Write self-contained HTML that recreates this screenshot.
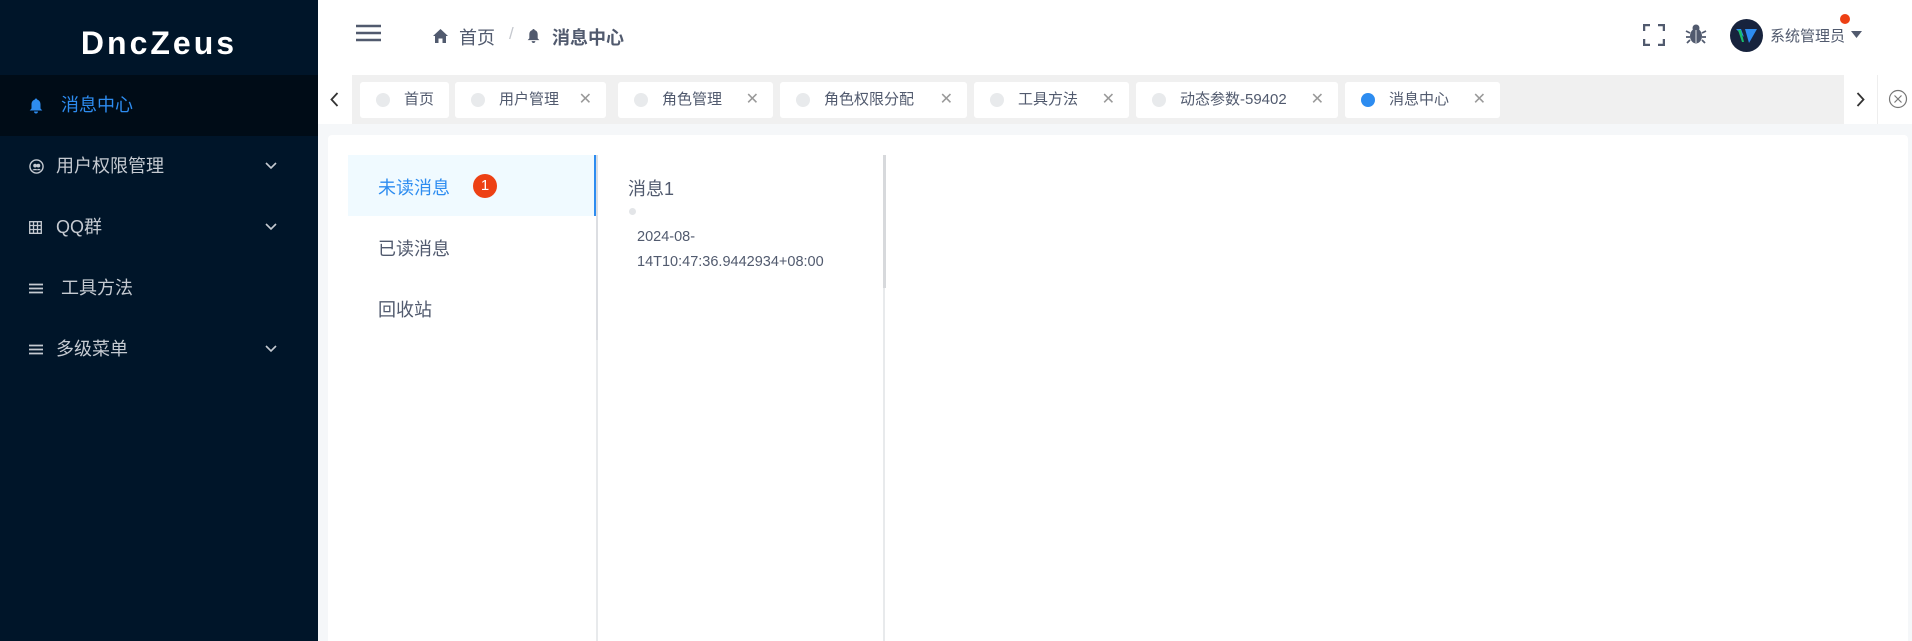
<!DOCTYPE html>
<html><head><meta charset="utf-8"><style>
*{box-sizing:border-box;margin:0;padding:0}
html,body{width:1912px;height:641px;overflow:hidden}
body{background:#f5f7f9;font-family:"Liberation Sans","Noto Sans CJK SC",sans-serif;position:relative}
.abs{position:absolute}
.side{left:0;top:0;width:318px;height:641px;background:#001529}
.logo{left:0;top:0;width:318px;height:75px;line-height:86px;text-align:center;color:#fff;font-size:32px;font-weight:bold;letter-spacing:3px}
.mi{left:0;width:318px;height:61px;color:#c5cad1;font-size:18px;line-height:61px}
.mi .ic{position:absolute;left:29px;top:0}
.mi .t{position:absolute;left:56px}
.mi .ch{position:absolute;left:265px;top:0}
.hdr{left:318px;top:0;width:1594px;height:75px;background:#fff}
.tabbar{left:318px;top:75px;width:1594px;height:49px;background:#f0f0f0}
.tab{top:82px;height:36px;background:#fff;border-radius:3px;font-size:15px;color:#515a6e;line-height:36px}
.tab .d{position:absolute;left:16px;top:11px;width:14px;height:14px;border-radius:50%;background:#e8eaec}
.tab .l{position:absolute;left:44px}
.tab .x{position:absolute;right:14px;top:0;color:#999;font-size:16px}
.card{left:328px;top:135px;width:1580px;height:506px;background:#fff;border-radius:4px 4px 0 0}
</style></head><body>
<div class="abs side"></div>
<div class="abs logo">DncZeus</div>
<div class="abs mi" style="top:75px;background:#000c17;color:#2d8cf0">
<svg class="ic" style="top:23px" width="14" height="16" viewBox="0 0 14 16"><path d="M7 0.5c.8 0 1.3.6 1.3 1.2C10.5 2.3 11.5 4 11.5 6.5v4l1.8 2H.7l1.8-2v-4C2.5 4 3.5 2.3 5.7 1.7 5.7 1.1 6.2.5 7 .5zM5 13.5h4c0 1.2-.9 2-2 2s-2-.8-2-2z" fill="#2d8cf0"/></svg>
<span class="t" style="left:61px">消息中心</span></div>
<div class="abs mi" style="top:136px">
<svg class="ic" style="top:23px" width="15" height="15" viewBox="0 0 16 16"><circle cx="8" cy="8" r="7" fill="none" stroke="#c5cad1" stroke-width="1.5"/><circle cx="6.5" cy="7" r="2" fill="#c5cad1"/><circle cx="10" cy="7" r="2" fill="#c5cad1"/><path d="M3.5 12c1-2 5-2 6 0zM8 12c1-2 4-2 4.5 0z" fill="#c5cad1"/></svg>
<span class="t">用户权限管理</span>
<svg class="ch" style="top:26px" width="12" height="8" viewBox="0 0 12 8"><path d="M1 1l5 5 5-5" fill="none" stroke="#c5cad1" stroke-width="1.6"/></svg></div>
<div class="abs mi" style="top:197px">
<svg class="ic" style="top:24px" width="13" height="13" viewBox="0 0 13 13"><path d="M.7.7h11.6v11.6H.7zM4.5.7v11.6M8.5.7v11.6M.7 4.5h11.6M.7 8.5h11.6" fill="none" stroke="#c5cad1" stroke-width="1.3"/></svg>
<span class="t">QQ群</span>
<svg class="ch" style="top:26px" width="12" height="8" viewBox="0 0 12 8"><path d="M1 1l5 5 5-5" fill="none" stroke="#c5cad1" stroke-width="1.6"/></svg></div>
<div class="abs mi" style="top:258px">
<svg class="ic" style="top:25px" width="14" height="11" viewBox="0 0 14 11"><path d="M0 1.5h14M0 5.5h14M0 9.5h14" stroke="#c5cad1" stroke-width="1.8"/></svg>
<span class="t" style="left:61px">工具方法</span></div>
<div class="abs mi" style="top:319px">
<svg class="ic" style="top:25px" width="14" height="11" viewBox="0 0 14 11"><path d="M0 1.5h14M0 5.5h14M0 9.5h14" stroke="#c5cad1" stroke-width="1.8"/></svg>
<span class="t">多级菜单</span>
<svg class="ch" style="top:26px" width="12" height="8" viewBox="0 0 12 8"><path d="M1 1l5 5 5-5" fill="none" stroke="#c5cad1" stroke-width="1.6"/></svg></div>

<div class="abs hdr"></div>
<svg class="abs" style="left:356px;top:24px" width="25" height="18" viewBox="0 0 25 18"><path d="M0 2h25M0 9h25M0 16h25" stroke="#515a6e" stroke-width="2.5"/></svg>
<svg class="abs" style="left:433px;top:29px" width="15" height="14" viewBox="0 0 15 14"><path d="M7.5 0L15 7h-2v7H9.5V9.5h-4V14H2V7H0z" fill="#515a6e"/></svg>
<div class="abs" style="left:459px;top:24px;font-size:18px;color:#515a6e">首页</div>
<div class="abs" style="left:509px;top:24px;font-size:17px;color:#c5c8ce">/</div>
<svg class="abs" style="left:527px;top:28px" width="13" height="16" viewBox="0 0 14 16"><path d="M7 0.5c.8 0 1.3.6 1.3 1.2C10.5 2.3 11.5 4 11.5 6.5v4l1.8 2H.7l1.8-2v-4C2.5 4 3.5 2.3 5.7 1.7 5.7 1.1 6.2.5 7 .5zM5 13.5h4c0 1.2-.9 2-2 2s-2-.8-2-2z" fill="#515a6e"/></svg>
<div class="abs" style="left:552px;top:24px;font-size:18px;color:#515a6e;font-weight:bold">消息中心</div>

<svg class="abs" style="left:1643px;top:24px" width="22" height="22" viewBox="0 0 22 22"><path d="M1 7V1h6M15 1h6v6M21 15v6h-6M7 21H1v-6" fill="none" stroke="#515a6e" stroke-width="2.5"/></svg>
<svg class="abs" style="left:1685px;top:23px" width="22" height="22" viewBox="0 0 22 22"><ellipse cx="11" cy="13" rx="6" ry="7.5" fill="#515a6e"/><circle cx="11" cy="5" r="3.5" fill="#515a6e"/><path d="M11 7v13" stroke="#fff" stroke-width=".8"/><path d="M5 10L1 8M5 14H1M5 17l-3 3M17 10l4-2M17 14h4M17 17l3 3" stroke="#515a6e" stroke-width="1.8"/></svg>
<div class="abs" style="left:1730px;top:19px;width:33px;height:33px;border-radius:50%;background:#17233d"></div>
<svg class="abs" style="left:1733px;top:26px" width="26" height="18" viewBox="0 0 26 18"><path d="M3 3h5l3 8zM12 3h12L16 17z" fill="#2d8cf0"/><path d="M5 4l4 12h2L8 4z" fill="#19be6b"/></svg>
<div class="abs" style="left:1770px;top:25px;font-size:15px;color:#515a6e">系统管理员</div>
<div class="abs" style="left:1840px;top:14px;width:10px;height:10px;border-radius:50%;background:#ed4014"></div>
<svg class="abs" style="left:1851px;top:31px" width="11" height="7" viewBox="0 0 11 7"><path d="M0 0h11L5.5 7z" fill="#515a6e"/></svg>

<div class="abs tabbar"></div>
<div class="abs" style="left:318px;top:75px;width:34px;height:49px;background:#fff"></div>
<svg class="abs" style="left:330px;top:92px" width="9" height="15" viewBox="0 0 9 15"><path d="M7.5 1L1.5 7.5l6 6.5" fill="none" stroke="#333" stroke-width="1.8"/></svg>
<div class="abs" style="left:1844px;top:75px;width:34px;height:49px;background:#fff;border-right:1px solid #eee"></div>
<svg class="abs" style="left:1856px;top:92px" width="9" height="15" viewBox="0 0 9 15"><path d="M1.5 1l6 6.5-6 6.5" fill="none" stroke="#333" stroke-width="1.8"/></svg>
<div class="abs" style="left:1878px;top:75px;width:34px;height:49px;background:#fff"></div>
<svg class="abs" style="left:1888px;top:89px" width="20" height="20" viewBox="0 0 20 20"><circle cx="10" cy="10" r="8.5" fill="none" stroke="#777" stroke-width="1.2"/><path d="M6.5 6.5l7 7M13.5 6.5l-7 7" stroke="#777" stroke-width="1.2"/></svg>

<div class="abs tab" style="left:360px;width:89px"><span class="d"></span><span class="l">首页</span></div>
<div class="abs tab" style="left:455px;width:151px"><span class="d"></span><span class="l">用户管理</span><span class="x">✕</span></div>
<div class="abs tab" style="left:618px;width:155px"><span class="d"></span><span class="l">角色管理</span><span class="x">✕</span></div>
<div class="abs tab" style="left:780px;width:187px"><span class="d"></span><span class="l">角色权限分配</span><span class="x">✕</span></div>
<div class="abs tab" style="left:974px;width:155px"><span class="d"></span><span class="l">工具方法</span><span class="x">✕</span></div>
<div class="abs tab" style="left:1136px;width:202px"><span class="d"></span><span class="l">动态参数-59402</span><span class="x">✕</span></div>
<div class="abs tab" style="left:1345px;width:155px"><span class="d" style="background:#2d8cf0"></span><span class="l">消息中心</span><span class="x">✕</span></div>

<div class="abs card"></div>
<div class="abs" style="left:348px;top:155px;width:248px;height:61px;background:#f0faff;border-right:2px solid #2d8cf0"></div>
<div class="abs" style="left:378px;top:174px;font-size:18px;color:#2d8cf0">未读消息</div>
<div class="abs" style="left:473px;top:174px;width:24px;height:24px;border-radius:50%;background:#ed4014;color:#fff;font-size:15px;text-align:center;line-height:24px">1</div>
<div class="abs" style="left:378px;top:235px;font-size:18px;color:#515a6e">已读消息</div>
<div class="abs" style="left:378px;top:296px;font-size:18px;color:#515a6e">回收站</div>
<div class="abs" style="left:596px;top:216px;width:2px;height:425px;background:#e8eaec"></div>
<div class="abs" style="left:596px;top:155px;width:2px;height:185px;background:#dcdee2"></div>
<div class="abs" style="left:628px;top:175px;font-size:18px;color:#515a6e">消息1</div>
<div class="abs" style="left:629px;top:208px;width:7px;height:7px;border-radius:50%;background:#e3e5e8"></div>
<div class="abs" style="left:637px;top:225px;font-size:14.5px;color:#515a6e;line-height:25px">2024-08-<br>14T10:47:36.9442934+08:00</div>
<div class="abs" style="left:883px;top:155px;width:2px;height:486px;background:#e8eaec"></div>
<div class="abs" style="left:883px;top:155px;width:3px;height:133px;background:#d7d9dc"></div>
</body></html>
